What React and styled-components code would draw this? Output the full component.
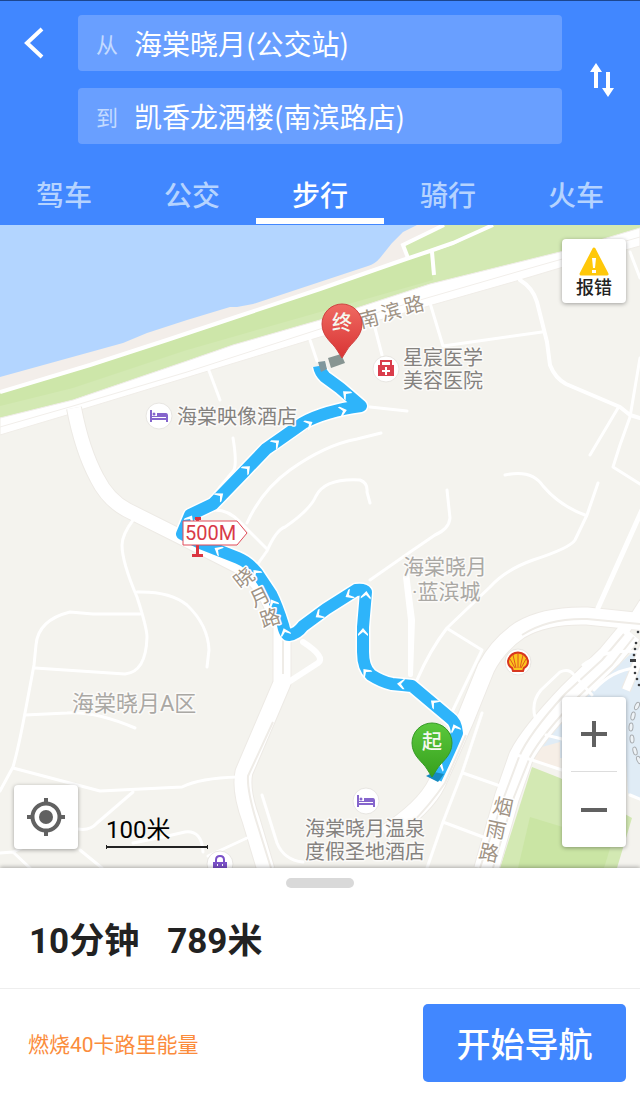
import React, { useState } from "react";
import styled, { createGlobalStyle } from "styled-components";

const GlobalStyle = createGlobalStyle`
  *, *::before, *::after { box-sizing: border-box; }
  body { margin: 0; background: #fff; }
  body, button {
    font-family: Roboto, "Noto Sans CJK SC", sans-serif;
  }
  button { border: 0; padding: 0; background: none; cursor: pointer; }
`;

const Page = styled.div`
  display: flex;
  flex-direction: column;
  min-height: 100vh;
`;

const Header = styled.header`
  background: #4187ff;
  border-top: 1px solid #1c468f;
  color: #fff;
`;

const SearchArea = styled.div`
  display: grid;
  grid-template-columns: 78px 1fr 78px;
  padding-top: 14px;
`;

const Fields = styled.div`
  display: flex;
  flex-direction: column;
  gap: 17px;
`;

const Field = styled.label`
  display: flex;
  align-items: center;
  gap: 16px;
  height: 56px;
  padding: 0 18px;
  border-radius: 4px;
  background: #699fff;
  font-size: 22px;
  color: #c3daff;
`;

const FieldInput = styled.input`
  flex: 1;
  min-width: 0;
  height: 42px;
  padding: 0;
  border: 0;
  outline: 0;
  background: transparent;
  color: #fff;
  font-family: "Noto Sans CJK SC", sans-serif;
  font-size: 28px;
`;

const BackButton = styled.button`
  display: flex;
  align-self: start;
  height: 56px;
  padding-left: 22px;
  align-items: center;
`;

const SwapButton = styled.button`
  display: flex;
  align-items: center;
  justify-content: center;
`;

const Tabs = styled.nav`
  display: grid;
  grid-template-columns: repeat(5, 1fr);
  padding-top: 20px;
`;

const Tab = styled.button`
  height: 60px;
  padding-top: 12px;
  border-bottom: 6px solid ${(p) => (p.$active ? "#fff" : "transparent")};
  margin-bottom: 1px;
  color: ${(p) => (p.$active ? "#fff" : "#b5d3ff")};
  font-size: 28px;
  line-height: 40px;
  font-weight: 500;
`;

const MapArea = styled.main`
  position: relative;
  flex: 1;
  min-height: 420px;
  overflow: hidden;
  background: #f4f3ee;
`;

const MapSvg = styled.svg`
  position: absolute;
  inset: 0;
  width: 100%;
  height: 100%;
  font-family: Roboto, "Noto Sans CJK SC", sans-serif;
`;

const FloatingCard = styled.div`
  position: absolute;
  width: 64px;
  border-radius: 4px;
  background: #fff;
  box-shadow: 0 1px 4px rgba(0, 0, 0, 0.35);
`;

const ReportCard = styled(FloatingCard)`
  top: 14px;
  right: 14px;
`;

const ZoomCard = styled(FloatingCard)`
  right: 14px;
  bottom: 21px;
`;

const LocateCard = styled(FloatingCard)`
  left: 14px;
  bottom: 19px;
`;

const CardButton = styled.button`
  display: flex;
  flex-direction: column;
  align-items: center;
  justify-content: center;
  width: 100%;
  height: ${(p) => p.$height || 64}px;
  color: #222;
  font-size: 18px;
  line-height: 20px;
  font-weight: 500;
`;

const CardDivider = styled.div`
  height: 1px;
  margin: 0 9px;
  background: #ddd;
`;

const Scale = styled.div`
  position: absolute;
  left: 106px;
  bottom: 20px;
  width: 102px;
  height: 36px;
  color: #000;
  font-size: 24px;
  line-height: 36px;
  border-bottom: 2px solid #222;

  &::before, &::after {
    content: "";
    position: absolute;
    bottom: -3px;
    width: 1px;
    height: 4px;
    background: #222;
  }
  &::before { left: 0; }
  &::after { right: 0; }
`;

const Sheet = styled.section`
  position: relative;
  background: #fff;
  box-shadow: 0 -1px 4px rgba(0, 0, 0, 0.3);
`;

const Handle = styled.div`
  width: 68px;
  height: 10px;
  margin: 0 auto;
  border-radius: 5px;
  background: #d9d9d9;
`;

const Summary = styled.div`
  display: flex;
  flex-direction: column;
  padding: 10px 0 20px;
  border-bottom: 1px solid #eee;
`;

const SummaryText = styled.h1`
  display: flex;
  gap: 28px;
  margin: 0;
  padding: 28px 29px 0;
  color: #222;
  font-size: 35px;
  line-height: 52px;
  font-weight: 700;
`;

const Actions = styled.div`
  display: flex;
  align-items: center;
  justify-content: space-between;
  height: 107px;
  padding: 0 14px 0 28px;
`;

const Calories = styled.span`
  color: #fb8c3c;
  font-size: 21px;
`;

const StartButton = styled.button`
  width: 203px;
  height: 78px;
  border-radius: 5px;
  background: #4187ff;
  color: #fff;
  font-size: 34px;
  font-weight: 500;
`;

const ROADS = [
  { w: 3, d: "M133 520Q122 535 122 545Q122 562 137 597Q147 628 147 637Q146 672 125 674L35 668" },
  { w: 3, d: "M137 592Q170 591 187 605Q208 625 209 650L207 667" },
  { w: 3, d: "M140 614H93L70 612Q38 620 36 645L34 665L25 713Q18 750 13 767L0 791" },
  { w: 3, d: "M25 715L67 713Q95 711 135 728" },
  { w: 3, d: "M13 768L100 791L182 787Q200 778 238 777" },
  { w: 3, d: "M133 792L97 823Q90 831 78 829" },
  { w: 3, d: "M133 843L163 837L185 832Q202 830 203 852" },
  { w: 3, d: "M208 856L247 838" },
  { w: 3, d: "M262 795L277 843Q284 860 303 862" },
  { w: 3, d: "M0 853L13 852L30 868M13 852L35 842M80 850L102 868" },
  { w: 3, d: "M208 368L220 400M233 438Q237 462 234 470Q222 484 210 500" },
  { w: 3, d: "M310 340L317 361M375 328L382 355M430 303L443 346L542 332" },
  { w: 3, d: "M213 510Q228 509 240 522L267 549" },
  { w: 3, d: "M247 523Q262 490 290 470Q325 445 357 439L381 433" },
  { w: 3, d: "M257 565L267 551Q276 530 285 527Q310 510 316 496Q325 478 360 480Q368 483 367 492L370 503" },
  { w: 4, d: "M520 280Q533 288 537 302L547 342L550 365Q555 378 566 384L620 407L630 415L640 418" },
  { w: 3, d: "M630 252L640 278M640 358L630 417L620 445L613 467L640 484M618 408L590 455" },
  { w: 3, d: "M370 407L407 411" },
  { w: 3, d: "M505 475Q532 469 543 486Q560 506 585 515" },
  { w: 3, d: "M598 483L587 515L575 540Q570 548 533 560Q505 570 490 587L447 628Q430 650 417 680" },
  { w: 3, d: "M448 629L482 650L453 710" },
  { w: 3, d: "M447 490L450 518Q449 529 435 535L413 550L370 580" },
  { w: 4, d: "M405 577L410 620L410 675M407 573L413 620L411 675" },
  { w: 5, d: "M642 510L598 608" },
  { w: 3, d: "M482 713L462 773L443 822L427 868M463 773L503 787M443 822L483 837" },
  { w: 6, d: "M303 642Q326 657 318 663L284 685" },
];

const ROUTE =
  "M436 779Q450 750 457 733Q456 722 450 718L412 686Q403 685 392 684Q382 682 371 675Q363 668 363 652V627L366 592Q364 589 356 590L326 609L303 626Q297 634 289 635Q285 635 283 625Q277 606 271 594L257 573Q248 562 238 558L200 543L182 534L190 515L213 504L243 473L266 449Q282 438 303 423Q325 411 361 406L340 388L325 377Q320 372 319 366";

const CHEVRONS = [
  [455, 728, -112], [434, 703, -140], [401, 684, -175], [366, 672, -130],
  [363, 632, -90], [366, 595, -84], [349, 595, 150], [319, 615, 147],
  [285, 632, -110], [273, 603, -118], [256, 573, -130], [218, 550, -150],
  [190, 519, -60], [220, 496, -38], [247, 469, -42], [276, 443, -38],
  [309, 424, -28], [343, 411, -16], [346, 394, -138], [440, 766, -65],
];

const COILS = [
  [637, 706, 25], [633, 716, 12], [631, 727, 4], [632, 739, -4], [635, 751, -14], [639, 760, -25],
];

const STATION_DOTS = [
  [638, 632], [636, 643], [635, 649], [634, 655], [635, 667], [635, 673], [637, 679], [639, 685],
];

function Pin({ x, y, fill, edge, text }) {
  return (
    <g transform={`translate(${x} ${y})`}>
      <path d="M0 34L-5 26C-9 19 -20 13 -20 0A20 20 0 1 1 20 0C20 13 9 19 5 26Z" fill={fill} stroke={edge} />
      <text y="6" textAnchor="middle" fontSize="20" fontWeight="500" fill="#f4f8ef">{text}</text>
    </g>
  );
}

function Poi({ x, y, children }) {
  return (
    <g transform={`translate(${x} ${y})`}>
      <circle r="13" fill="#fff" stroke="#e8e6e2" />
      {children}
    </g>
  );
}

function Bed() {
  return (
    <g fill="#8565cc">
      <path d="M-9-6H-7V6H-9ZM-7 2H9V4H-7ZM7-1H9V6H7ZM-2-3H7Q9-3 9 0H-2ZM-7 0H9V1H-7Z" />
      <circle cx="-5" cy="-2" r="1.500" />
    </g>
  );
}

function Label({ x, y, size = 20, color = "#85827f", children }) {
  return (
    <text
      x={x} y={y} fontSize={size} fill={color} stroke="#fbfaf8" strokeWidth="3"
      strokeLinejoin="round" paintOrder="stroke"
    >
      {children}
    </text>
  );
}

function RoadName({ chars }) {
  return chars.map(([c, x, y, angle]) => (
    <g key={c} transform={`translate(${x} ${y}) rotate(${angle})`}>
      <text
        y="7" textAnchor="middle" fontSize="20" fill="#a09385" stroke="#fff"
        strokeWidth="3" strokeLinejoin="round" paintOrder="stroke"
      >
        {c}
      </text>
    </g>
  ));
}

function MapDrawing() {
  return (
    <MapSvg viewBox="0 225 640 643" preserveAspectRatio="xMidYMid slice" aria-label="步行路线地图">
      <defs>
        <linearGradient id="red" x1="0" y1="0" x2="0" y2="1">
          <stop offset="0" stopColor="#ef6a62" />
          <stop offset="1" stopColor="#d93434" />
        </linearGradient>
        <linearGradient id="green" x1="0" y1="0" x2="0" y2="1">
          <stop offset="0" stopColor="#5ac83c" />
          <stop offset="1" stopColor="#37a01d" />
        </linearGradient>
      </defs>
      <rect y="225" width="640" height="643" fill="#f4f3ee" />

      <path d="M0 225H445L493 225L320 290L0 393Z" fill="#f3eeea" />
      <path d="M0 225H417L403 232L392 243L380 258Q375 264 368 266L253 304L237 307H230L187 320L147 333L123 343L0 377Z" fill="#b3d5ff" />
      <path d="M0 393L90 365L167 340L233 318L320 290L403 261L453 245L493 225H640V228L560 252L430 284L320 320L233 345L187 361L73 400L0 418Z" fill="#d3e9b3" />
      <path d="M0 393L90 365L167 340L233 318L320 290L430 252L433 280L320 312L187 350L73 388L0 406Z" fill="#cde6a9" />
      <path d="M404 245L445 225H493L430 252L408 259Z" fill="#d3e9b3" />
      <path d="M0 392L90 365L167 340L233 318L320 289L403 260L430 251L453 243L493 225" fill="none" stroke="#fff" strokeWidth="4" />
      <path d="M444 225L403 245L408 258M432 252L434 275" fill="none" stroke="#fff" strokeWidth="4" />
      <path d="M0 418L73 400L187 361L233 345L320 320L430 284L560 252L640 228V246L560 268L520 280L320 337L80 410L67 415L0 435Z" fill="#fff" stroke="#f0ede8" strokeWidth="1" />
      <path d="M0 427L73 406L187 372L320 329L520 271L640 237" fill="none" stroke="#f2efeb" />

      <path d="M542 747L562 715L600 680L617 666L640 646V800L628 793L626 760L560 758Z" fill="#e0ecf6" />
      <path d="M542 747L560 742V769L520 757Z" fill="#f6eee6" />
      <path d="M532 767L560 778L632 818L617 868H500Z" fill="#d3e9b3" />
      <path d="M530 817L612 842L604 868H518Z" fill="#cae5a4" />

      <g fill="none" strokeLinejoin="round">
        {[["#edeae5", 2], ["#fff", 0]].map(([c, extra]) => (
          <g key={c} stroke={c}>
            <path strokeWidth={14 + extra} d="M74 408Q82 450 97 478Q108 500 127 510L177 535L240 567Q270 590 277 625" />
            <path strokeWidth={17 + extra} d="M282 625V683L244 772Q240 790 251 820L266 870" />
            <path strokeWidth={8 + extra} d="M650 592L612 652" />
            <path strokeWidth={24 + extra} d="M630 632L610 656L571 694Q532 735 521 757L507 797L486 870" />
            <path strokeWidth={8 + extra} d="M650 632L626 690" />
            <path strokeWidth={17 + extra} d="M645 622L587 616Q545 615 520 630Q498 645 486 668L465 720L437 783Q425 808 385 834" />
          </g>
        ))}
        <path stroke="#efece7" strokeWidth="2" d="M283 635V674M273 722L248 776Q247 790 256 820L271 868M640 624L587 619Q548 618 522 635M466 735L445 783Q430 805 410 825M624 634L602 660L565 694Q528 735 519 757L504 797L480 868M634 637L612 665L578 697Q542 735 530 757L514 797L493 868" />
      </g>

      <g fill="none" stroke="#fff" strokeLinecap="round" strokeLinejoin="round">
        {ROADS.map((r) => <path key={r.d} d={r.d} strokeWidth={r.w} />)}
        <path d="M517 755L562 770M630 795L642 800M546 735L562 739M535 717Q531 702 541 690L560 672Q569 668 574 675L592 695M583 665Q605 648 640 652M594 690Q612 670 636 668" strokeWidth="3" />
      </g>

      <g fill="#3b3d40">
        {STATION_DOTS.map(([x, y]) => <circle key={y} cx={x} cy={y} r="1.300" />)}
        <path d="M630 659H636V662H630Z" />
      </g>
      <g fill="#eef3f7" stroke="#a9adb1">
        {COILS.map(([x, y, a]) => (
          <ellipse key={y} rx="2" ry="4" transform={`translate(${x} ${y}) rotate(${a})`} />
        ))}
      </g>

      <RoadName chars={[["南", 369, 319, -14], ["滨", 391, 312, -14], ["路", 414, 305, -14]]} />
      <RoadName chars={[["烟", 503, 807, 12], ["雨", 496, 830, 12], ["路", 489, 853, 12]]} />
      <Label x={72} y={711} size={22} color="#aaa8a4">海棠晓月A区</Label>
      <Label x={403} y={574} size={21} color="#aaa8a4">海棠晓月</Label>
      <Label x={412} y={599} size={21} color="#aaa8a4">·蓝滨城</Label>

      <g fill="none" strokeLinejoin="round">
        <path d={ROUTE} stroke="#fff" strokeWidth="15" />
        <path d={ROUTE} stroke="#2eb4fa" strokeWidth="12" />
      </g>
      <g fill="#fff">
        {CHEVRONS.map(([x, y, a]) => (
          <path key={`${x},${y}`} d="M-4-5H-2L4 0L-2 5H-4L0 0Z" transform={`translate(${x} ${y}) rotate(${a})`} />
        ))}
      </g>
      <path d="M318 362L325 361L327 369L321 372Z" fill="#80979d" />
      <path d="M328 358L341 354L345 363L331 368Z" fill="#879592" />
      <RoadName chars={[["晓", 244, 578, -38], ["月", 260, 597, -26], ["路", 270, 618, -18]]} />

      <Label x={177} y={424}>海棠映像酒店</Label>
      <Label x={403} y={365}>星宸医学</Label>
      <Label x={403} y={388}>美容医院</Label>
      <Label x={305} y={836}>海棠晓月温泉</Label>
      <Label x={305} y={859}>度假圣地酒店</Label>

      <Poi x={159} y={416}><Bed /></Poi>
      <Poi x={366} y={801}><Bed /></Poi>
      <Poi x={386} y={369}>
        <path d="M-8-4H8V7H-8Z" fill="#da3d4c" />
        <path d="M-5-4V-8H5V-4" fill="none" stroke="#da3d4c" strokeWidth="2" />
        <path d="M-4 2H4M0-2V6" stroke="#fff" strokeWidth="2" />
      </Poi>
      <Poi x={518} y={662}>
        <path d="M-5 9L-6 6Q-10 4-10-1Q-8-9 0-9.500Q8-9 10-1Q10 4 6 6L5 9Z" fill="#fbc51d" stroke="#d8371f" strokeWidth="2" />
        <path d="M0 6V-8M-2 6L-5-7M2 6L5-7M-3 6L-8-3M3 6L8-3" stroke="#e2571f" fill="none" />
      </Poi>
      <Poi x={220} y={864}>
        <path d="M-7-2H7V7H-7Z" fill="#7a50c8" />
        <path d="M-4-2V-4Q-4-8 0-8Q4-8 4-4V-2" fill="none" stroke="#7a50c8" strokeWidth="2" />
        <path d="M-3 1H-2M2 1H3" stroke="#fff" strokeWidth="2" />
      </Poi>

      <path d="M195 517H201V520H199V554H203V557H192V554H196V520H195Z" fill="#da3440" />
      <path d="M183 521H237L247 533L237 545H183Z" fill="#fff" stroke="#e14b59" />
      <text x="185" y="540" fontSize="20" fill="#d83a48">500M</text>

      <path d="M426 776L434 772L444 774L438 782Z" fill="#168abf" />
      <Pin x={432} y={743} fill="url(#green)" edge="#359926" text="起" />
      <Pin x={342} y={324} fill="url(#red)" edge="#cf4241" text="终" />
    </MapSvg>
  );
}

export default function App() {
  const [active, setActive] = useState("步行");
  return (
    <Page>
      <GlobalStyle />
      <Header>
        <SearchArea>
          <BackButton aria-label="返回">
            <svg width="24" height="32" viewBox="0 0 24 32" fill="none" stroke="#fff" strokeWidth="4">
              <path d="M20 2L5 16L20 30" />
            </svg>
          </BackButton>
          <Fields>
            <Field>从<FieldInput defaultValue="海棠晓月(公交站)" /></Field>
            <Field>到<FieldInput defaultValue="凯香龙酒楼(南滨路店)" /></Field>
          </Fields>
          <SwapButton aria-label="交换起终点">
            <svg width="26" height="34" viewBox="0 0 26 34" fill="#fff">
              <path d="M8 0L14 9H10V25H6V9H2Z M20 34L14 25H18V9H22V25H26Z" />
            </svg>
          </SwapButton>
        </SearchArea>
        <Tabs aria-label="出行方式">
          {["驾车", "公交", "步行", "骑行", "火车"].map((t) => (
            <Tab key={t} $active={t === active} aria-pressed={t === active} onClick={() => setActive(t)}>
              {t}
            </Tab>
          ))}
        </Tabs>
      </Header>

      <MapArea>
        <MapDrawing />
        <ReportCard>
          <CardButton>
            <svg width="32" height="34" viewBox="0 0 32 34">
              <path d="M16 5L29 30H3Z" fill="#ffc80a" stroke="#ffc80a" strokeWidth="3" strokeLinejoin="round" />
              <path d="M14 14H18L17 24H15ZM14 26H18V29H14Z" fill="#fff" />
            </svg>
            报错
          </CardButton>
        </ReportCard>
        <ZoomCard>
          <CardButton $height={74} aria-label="放大">
            <svg width="28" height="28" stroke="#616161" strokeWidth="4"><path d="M1 14H27M14 1V27" /></svg>
          </CardButton>
          <CardDivider />
          <CardButton $height={75} aria-label="缩小">
            <svg width="28" height="28" stroke="#616161" strokeWidth="4"><path d="M1 14H27" /></svg>
          </CardButton>
        </ZoomCard>
        <LocateCard>
          <CardButton aria-label="定位">
            <svg width="38" height="38" viewBox="0 0 38 38" fill="none" stroke="#616161" strokeWidth="4">
              <circle cx="19" cy="19" r="13.500" />
              <circle cx="19" cy="19" r="7" fill="#616161" stroke="none" />
              <path d="M19 0V6M19 32V38M0 19H6M32 19H38" />
            </svg>
          </CardButton>
        </LocateCard>
        <Scale>100米</Scale>
      </MapArea>

      <Sheet>
        <Summary>
          <Handle />
          <SummaryText><span>10分钟</span><span>789米</span></SummaryText>
        </Summary>
        <Actions>
          <Calories>燃烧40卡路里能量</Calories>
          <StartButton>开始导航</StartButton>
        </Actions>
      </Sheet>
    </Page>
  );
}
